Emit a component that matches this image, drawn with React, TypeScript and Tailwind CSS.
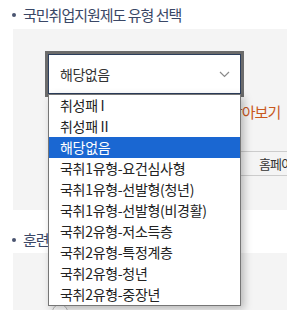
export default function App() {
  const options = [
    "취성패 I",
    "취성패 II",
    "해당없음",
    "국취1유형-요건심사형",
    "국취1유형-선발형(청년)",
    "국취1유형-선발형(비경활)",
    "국취2유형-저소득층",
    "국취2유형-특정계층",
    "국취2유형-청년",
    "국취2유형-중장년",
  ];
  const font = { fontFamily: '"Noto Sans CJK KR", "Noto Sans", sans-serif' };
  return (
    <div
      className="relative w-[287px] h-[310px] overflow-hidden bg-white flex flex-col"
      style={font}
    >
      <div className="h-[29px] flex items-center pl-[12px] pt-[1px] gap-[7px] shrink-0">
        <span className="w-[4px] h-[4px] rounded-full bg-[#4a5470]" />
        <span className="text-[15px] leading-[20px] tracking-[-1px] text-[#3a4766]">
          국민취업지원제도 유형 선택
        </span>
      </div>
      <div className="ml-[13px] h-[181px] bg-[#f4f4f4] pt-[25px] shrink-0">
        <div className="ml-[35px] w-[193px] h-[40px] border border-[#2c3e5c] bg-white outline outline-[3px] outline-[#6b6b6b] flex items-center justify-between pl-[11px] pr-[10px]">
          <span className="text-[14px] leading-[20px] tracking-[-0.5px] text-[#333]">해당없음</span>
          <svg width="11" height="7" viewBox="0 0 11 7" fill="none">
            <path d="M1 1L5.5 5.5L10 1" stroke="#8a8a8a" strokeWidth="1.2" />
          </svg>
        </div>
        <div className="mt-[8px] ml-[216px] text-[15px] leading-[20px] tracking-[-1px] text-[#c9581e] whitespace-nowrap">
          찾아보기
        </div>
        <div className="mt-[29px] ml-[47px] h-[25px] border-y border-[#cccccc] flex items-center pl-[199px] text-[13px] tracking-[-1px] text-[#333] whitespace-nowrap">
          홈페이지
        </div>
      </div>
      <div className="h-[43px] flex items-end pb-[3px] pl-[12px] gap-[7px] shrink-0">
        <span className="w-[4px] h-[4px] rounded-full bg-[#4a5470] mb-[8px]" />
        <span className="text-[15px] leading-[20px] tracking-[-1px] text-[#3a4766]">
          훈련과정 선택
        </span>
      </div>
      <div className="ml-[13px] flex-1 bg-[#f4f4f4] pt-[51px] pl-[39px]">
        <div className="w-[16px] h-[16px] rounded-full border border-[#bbbbbb] bg-white" />
      </div>
      <div className="absolute left-[48px] top-[94px] w-[193px] h-[212px] border border-[#767676] bg-white shadow-[3px_3px_8px_rgba(0,0,0,0.25)]">
        {options.map((o, i) => (
          <div
            key={o}
            className={
              i === 2
                ? "h-[21px] flex items-center pl-[11px] text-[14px] tracking-[-0.3px] bg-[#1a67d2] text-white whitespace-nowrap"
                : "h-[21px] flex items-center pl-[11px] text-[14px] tracking-[-0.3px] text-[#222] whitespace-nowrap"
            }
          >
            {o}
          </div>
        ))}
      </div>
    </div>
  );
}
